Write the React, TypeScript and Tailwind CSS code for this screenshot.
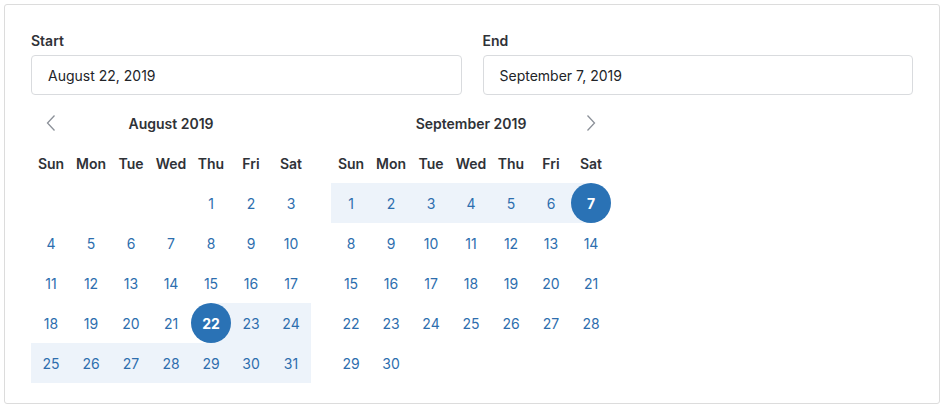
import React from "react";

type Month = {
  title: string;
  offset: number;
  days: number;
  year: number;
  month: number;
};

const START = { m: 8, d: 22 };
const END = { m: 9, d: 7 };

function key(m: number, d: number) {
  return m * 100 + d;
}

const Chevron = ({ dir }: { dir: "left" | "right" }) => (
  <svg width="12" height="18" viewBox="0 0 12 18" fill="none">
    {dir === "left" ? (
      <path d="M9.5 1.5 L2.5 9 L9.5 16.5" stroke="#8b9098" strokeWidth="1.3" />
    ) : (
      <path d="M2.5 1.5 L9.5 9 L2.5 16.5" stroke="#8b9098" strokeWidth="1.3" />
    )}
  </svg>
);

const WEEK = ["Sun", "Mon", "Tue", "Wed", "Thu", "Fri", "Sat"];

function MonthGrid({ m, side }: { m: Month; side: "left" | "right" }) {
  const cells: (number | null)[] = [];
  for (let i = 0; i < m.offset; i++) cells.push(null);
  for (let d = 1; d <= m.days; d++) cells.push(d);
  const s = key(START.m, START.d);
  const e = key(END.m, END.d);
  return (
    <div className="w-[280px]">
      <div className="grid grid-cols-7 h-[40px] items-center">
        <div className="flex justify-center">
          {side === "left" ? <Chevron dir="left" /> : null}
        </div>
        <div className="col-span-5 text-center text-[14px] font-semibold text-[#2f3237]">
          {m.title}
        </div>
        <div className="flex justify-center">
          {side === "right" ? <Chevron dir="right" /> : null}
        </div>
      </div>
      <div className="grid grid-cols-7 h-[40px] items-center">
        {WEEK.map((w) => (
          <div key={w} className="text-center text-[14px] font-semibold text-[#2f3237]">
            {w}
          </div>
        ))}
      </div>
      <div className="grid grid-cols-7">
        {cells.map((d, i) => {
          if (d === null) return <div key={i} className="h-[40px]" />;
          const k = key(m.month, d);
          const isStart = k === s;
          const isEnd = k === e;
          const inRange = k > s && k < e;
          let bg = "";
          if (inRange) bg = "bg-[#edf3fa]";
          return (
            <div key={i} className={`relative h-[40px] flex items-center justify-center ${bg}`}>
              {isStart ? (
                <div className="absolute right-0 top-0 h-[40px] w-[20px] bg-[#edf3fa]" />
              ) : null}
              {isEnd ? (
                <div className="absolute left-0 top-0 h-[40px] w-[20px] bg-[#edf3fa]" />
              ) : null}
              {isStart || isEnd ? (
                <div className="relative w-[40px] h-[40px] rounded-full bg-[#2a72b5] flex items-center justify-center text-white font-bold text-[14px]">
                  {d}
                </div>
              ) : (
                <span className="text-[14px] text-[#2d6eae]">{d}</span>
              )}
            </div>
          );
        })}
      </div>
    </div>
  );
}

export default function App() {
  const aug: Month = { title: "August 2019", offset: 4, days: 31, year: 2019, month: 8 };
  const sep: Month = { title: "September 2019", offset: 0, days: 30, year: 2019, month: 9 };
  return (
    <div
      className="bg-white w-[945px] h-[410px] pt-[4px] pl-[4px]"
      style={{ fontFamily: "Inter, 'Noto Sans', sans-serif" }}
    >
      <div className="w-[936px] h-[400px] border border-[#dcdcdc] rounded-[3px] px-[26px] pt-[26px]">
        <div className="flex gap-[21px]">
          <div className="flex-1">
            <div className="h-[20px] leading-[20px] text-[14px] font-semibold text-[#2f3237]">Start</div>
            <div className="mt-[4px] h-[40px] border border-[#d9dbde] rounded-[4px] flex items-center px-[16px] text-[14px] text-[#222428]">
              August 22, 2019
            </div>
          </div>
          <div className="flex-1">
            <div className="h-[20px] leading-[20px] text-[14px] font-semibold text-[#2f3237]">End</div>
            <div className="mt-[4px] h-[40px] border border-[#d9dbde] rounded-[4px] flex items-center px-[16px] text-[14px] text-[#222428]">
              September 7, 2019
            </div>
          </div>
        </div>
        <div className="mt-[8px] flex gap-[20px]">
          <MonthGrid m={aug} side="left" />
          <MonthGrid m={sep} side="right" />
        </div>
      </div>
    </div>
  );
}
